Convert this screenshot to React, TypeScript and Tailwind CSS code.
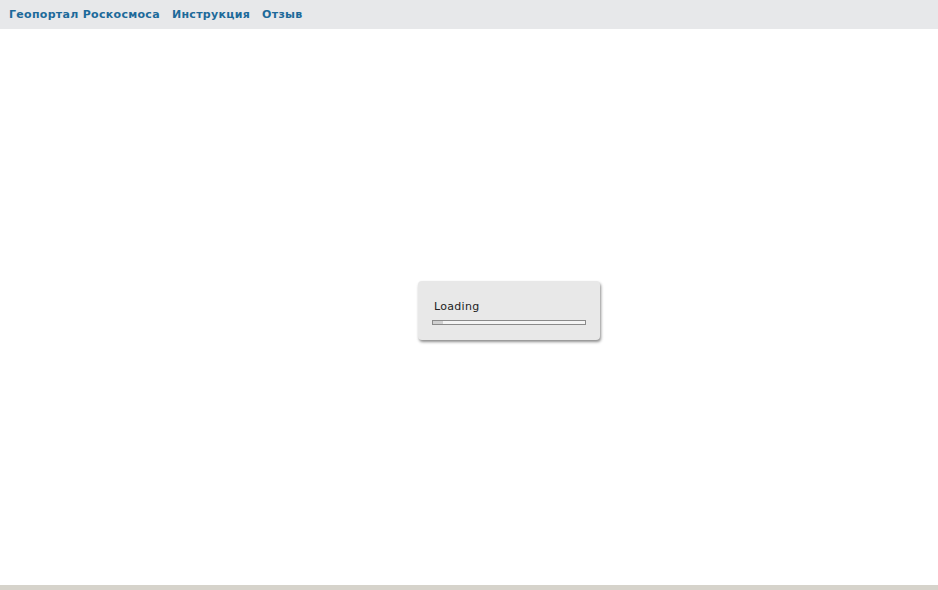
export default function App() {
  return (
    <div className="flex h-[590px] w-full flex-col bg-white font-['DejaVu_Sans',sans-serif]">
      <header className="flex h-[29px] shrink-0 items-center gap-[12px] bg-[#e7e8ea] pl-[9px] pt-[1px] text-[11px] font-bold text-[#1d6a9a]">
        <a className="tracking-[0.3px]">Геопортал Роскосмоса</a>
        <a className="tracking-[0.3px]">Инструкция</a>
        <a className="tracking-[0.3px]">Отзыв</a>
      </header>
      <main className="flex flex-1 items-center justify-center pb-[14px]">
        <div className="ml-[80px] mt-[20px] flex h-[59px] w-[182px] flex-col rounded-[4px] bg-[#e8e8e8] px-[14px] pt-[19px] shadow-[1px_2px_3px_rgba(0,0,0,0.45)]">
          <span className="pl-[2px] text-[11px] leading-[13px] tracking-[0.3px] text-[#222]">Loading</span>
          <div className="mt-[7px] h-[5px] w-[154px] border border-[#8a8a8a] bg-[#f4f4f4]">
            <div className="h-full w-[10px] bg-[#d0d0d0]" />
          </div>
        </div>
      </main>
      <footer className="h-[5px] shrink-0 bg-[#d6d3cb]" />
    </div>
  );
}
